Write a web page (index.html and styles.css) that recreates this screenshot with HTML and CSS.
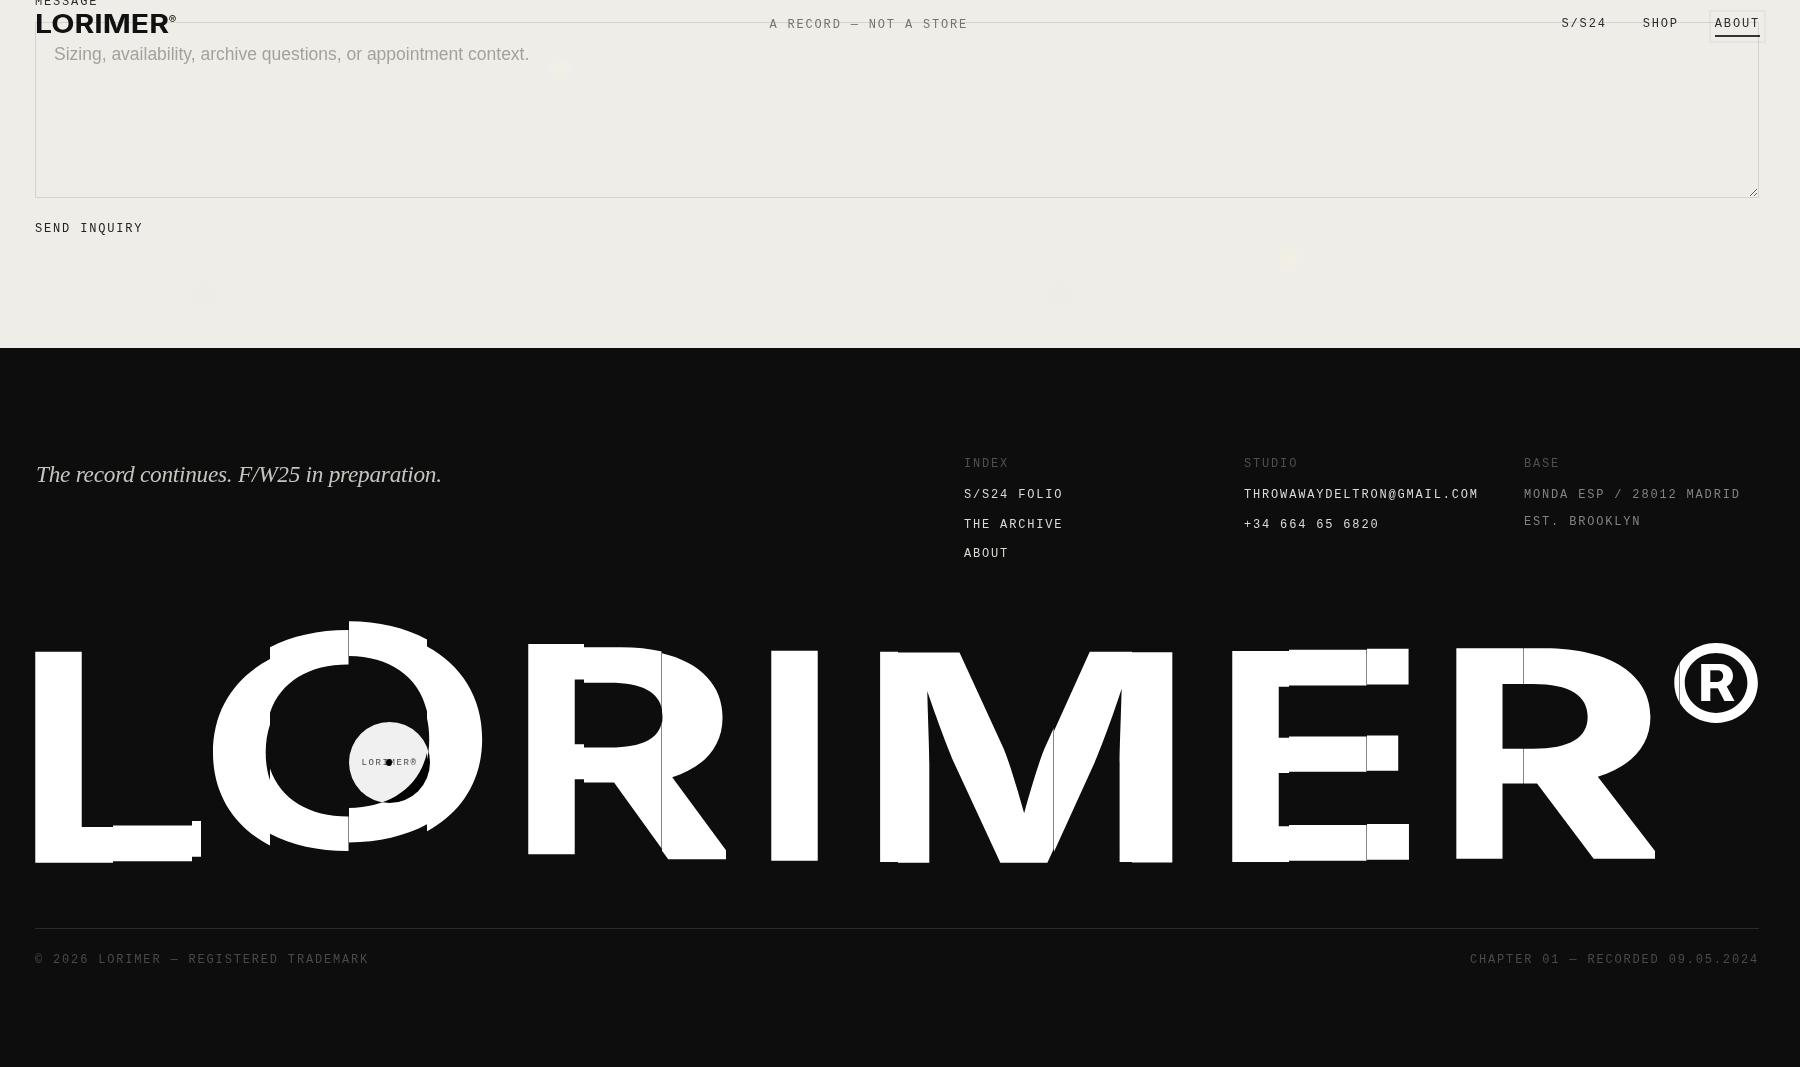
FILE: index.html
```html
<!DOCTYPE html>
<html lang="en">
<head>
  <meta charset="UTF-8">
  <meta name="viewport" content="width=device-width, initial-scale=1.0">
  <title>Lorimer - About</title>
  <link rel="stylesheet" href="styles.css">
</head>
<body>
  <header class="site-header">
    <a class="logo" href="#">
      <svg width="141" height="20" viewBox="0 0 141 20">
        <text class="logo-word" x="0" y="18" textLength="134" lengthAdjust="spacingAndGlyphs">LORIMER</text>
        <text class="logo-reg" x="133.5" y="9">®</text>
      </svg>
    </a>
    <span class="tagline-top">A RECORD — NOT A STORE</span>
    <nav class="site-nav">
      <a href="#">S/S24</a>
      <a href="#">SHOP</a>
      <a class="current" href="#">ABOUT</a>
    </nav>
  </header>

  <section class="inquiry">
    <label class="field-label" for="message">MESSAGE</label>
    <textarea class="field-text" id="message" placeholder="Sizing, availability, archive questions, or appointment context."></textarea>
    <button class="send" type="button">SEND INQUIRY</button>
  </section>

  <footer class="site-footer">
    <div class="footer-top">
      <p class="record">The record continues. F/W25 in preparation.</p>
      <div class="footer-col">
        <h4>INDEX</h4>
        <a href="#">S/S24 FOLIO</a>
        <a href="#">THE ARCHIVE</a>
        <a href="#">ABOUT</a>
      </div>
      <div class="footer-col">
        <h4>STUDIO</h4>
        <a href="#">THROWAWAYDELTRON@GMAIL.COM</a>
        <a href="#">+34 664 65 6820</a>
      </div>
      <div class="footer-col base">
        <h4>BASE</h4>
        <span>MONDA ESP / 28012 MADRID</span>
        <span>EST. BROOKLYN</span>
      </div>
    </div>

    <div class="wordmark">
      <!-- each letter is real text, cut into columns that sit slightly out of line -->
      <svg class="wordmark-svg" width="1724" height="270" viewBox="35 610 1724 270">
        <defs>
          <text id="g-l" class="wm">L</text>
          <text id="g-o" class="wm wm-o">O</text>
          <text id="g-r" class="wm">R</text>
          <text id="g-i" class="wm">I</text>
          <text id="g-m" class="wm">M</text>
          <text id="g-e" class="wm">E</text>
          <text id="g-reg" class="wm wm-reg">®</text>

          <clipPath id="l1"><rect x="30" y="600" width="83" height="280"/></clipPath>
          <clipPath id="l2"><rect x="113" y="600" width="79" height="280"/></clipPath>
          <clipPath id="l3"><rect x="192" y="600" width="9" height="280"/></clipPath>
          <clipPath id="o1"><rect x="200" y="600" width="70" height="280"/></clipPath>
          <clipPath id="o2"><rect x="270" y="600" width="78.5" height="280"/></clipPath>
          <clipPath id="o3"><rect x="349" y="600" width="78" height="280"/></clipPath>
          <clipPath id="o4"><rect x="427" y="600" width="70" height="280"/></clipPath>
          <clipPath id="r1"><rect x="520" y="600" width="64" height="280"/></clipPath>
          <clipPath id="r2"><rect x="584" y="600" width="77.5" height="280"/></clipPath>
          <clipPath id="r3"><rect x="662" y="600" width="64" height="280"/></clipPath>
          <clipPath id="m1"><rect x="870" y="600" width="28" height="280"/></clipPath>
          <clipPath id="m2"><rect x="898" y="600" width="155.5" height="280"/></clipPath>
          <clipPath id="m3"><rect x="1054" y="600" width="78" height="280"/></clipPath>
          <clipPath id="m4"><rect x="1132" y="600" width="50" height="280"/></clipPath>
          <clipPath id="e1"><rect x="1225" y="600" width="64" height="280"/></clipPath>
          <clipPath id="e2"><rect x="1289" y="600" width="77.5" height="280"/></clipPath>
          <clipPath id="e3"><rect x="1367" y="600" width="45" height="280"/></clipPath>
          <clipPath id="s1"><rect x="1450" y="600" width="73.5" height="280"/></clipPath>
          <clipPath id="s2"><rect x="1524" y="600" width="131" height="280"/></clipPath>
          <clipPath id="t1"><rect x="1665" y="600" width="14.5" height="280"/></clipPath>
          <clipPath id="t2"><rect x="1680" y="600" width="90" height="280"/></clipPath>
        </defs>

        <g clip-path="url(#l1)"><use href="#g-l" transform="translate(14.7 862.7) scale(3.12 2.898)"/></g>
        <g clip-path="url(#l2)"><use href="#g-l" transform="translate(-17.1 861.2) scale(4.13 2.898)"/></g>
        <g clip-path="url(#l3)"><use href="#g-l" transform="translate(-17.1 856.7) scale(4.13 2.898)"/></g>

        <g clip-path="url(#o1)"><use href="#g-o" transform="translate(192.7 860) scale(4.03 2.96)"/></g>
        <g clip-path="url(#o2)"><use href="#g-o" transform="translate(192.7 848.2) scale(4.03 2.96)"/></g>
        <g clip-path="url(#o3)"><use href="#g-o" transform="translate(192.7 839.6) scale(4.03 2.96)"/></g>
        <g clip-path="url(#o4)"><use href="#g-o" transform="translate(192.7 846.6) scale(4.03 2.96)"/></g>

        <g clip-path="url(#r1)"><use href="#g-r" transform="translate(507.7 854.3) scale(3.12 2.892)"/></g>
        <g clip-path="url(#r2)"><use href="#g-r" transform="translate(484.4 857.6) scale(3.905 2.892)"/></g>
        <g clip-path="url(#r3)"><use href="#g-r" transform="translate(484.4 859.3) scale(3.905 2.892)"/></g>

        <use href="#g-i" transform="translate(750.7 860.7) scale(3.12 2.885)"/>

        <g clip-path="url(#m1)"><use href="#g-m" transform="translate(855.4 862) scale(3.75 2.89)"/></g>
        <g clip-path="url(#m2)"><use href="#g-m" transform="translate(849.1 862.7) scale(3.75 2.89)"/></g>
        <g clip-path="url(#m3)"><use href="#g-m" transform="translate(851 862) scale(3.75 2.89)"/></g>
        <g clip-path="url(#m4)"><use href="#g-m" transform="translate(847.5 862.5) scale(3.75 2.89)"/></g>

        <g clip-path="url(#e1)"><use href="#g-e" transform="translate(1211.7 862) scale(3.12 2.9)"/></g>
        <g clip-path="url(#e2)"><use href="#g-e" transform="translate(1183.6 860.7) scale(4.07 2.9)"/></g>
        <g clip-path="url(#e3)"><use href="#g-e" transform="translate(1183.6 859.7) scale(4.07 2.9)"/></g>

        <g clip-path="url(#s1)"><use href="#g-r" transform="translate(1435.9 858.7) scale(3.1 2.892)"/></g>
        <g clip-path="url(#s2)"><use href="#g-r" transform="translate(1401.6 858.7) scale(4.08 2.892)"/></g>

        <g clip-path="url(#t1)"><use href="#g-reg" transform="translate(1666.9 747) scale(1.47 1.41)"/></g>
        <g clip-path="url(#t2)"><use href="#g-reg" transform="translate(1666.9 747) scale(1.47 1.41)"/></g>
      </svg>

      <div class="cursor">
        <span class="cursor-label">LORIMER®</span>
        <span class="cursor-dot"></span>
      </div>
    </div>

    <div class="footer-bottom">
      <span>© 2026 LORIMER — REGISTERED TRADEMARK</span>
      <span>CHAPTER 01 — RECORDED 09.05.2024</span>
    </div>
  </footer>
</body>
</html>
```
FILE: styles.css
```css
* {
  box-sizing: border-box;
}

html,
body {
  height: 100%;
}

body {
  margin: 0;
  overflow: hidden;
  background-color: #0d0d0e;
  font-family: "Liberation Mono", monospace;
  font-size: 12px;
  letter-spacing: 1.83px;
}

a {
  color: inherit;
  text-decoration: none;
}

/* header */
.site-header {
  position: fixed;
  top: 0;
  left: 0;
  right: 0;
  z-index: 5;
  display: flex;
  justify-content: space-between;
  align-items: center;
  height: 48px;
  padding: 0 40px 0 35px;
  color: #2b2b2b;
}

.logo {
  display: block;
  height: 20px;
  margin-top: 2px;
}

.logo svg {
  display: block;
  overflow: visible;
}

.logo-word {
  font-family: Inter, sans-serif;
  font-size: 25px;
  font-weight: 700;
  letter-spacing: 0;
  fill: #111;
}

.logo-reg {
  font-family: Inter, sans-serif;
  font-size: 12px;
  font-weight: 600;
  letter-spacing: 0;
  fill: #333;
}

.tagline-top {
  margin-top: 1px;
  color: #74736f;
}

.site-nav {
  display: flex;
  gap: 36px;
  margin-top: 4px;
}

.site-nav a {
  line-height: 16px;
  padding-bottom: 3px;
  border-bottom: 2px solid transparent;
}

.site-nav .current {
  border-bottom-color: #333;
  outline: 2px solid rgba(0, 0, 0, 0.035);
  outline-offset: 4px;
}

/* inquiry form, the page is scrolled so its top is cut off */
.inquiry {
  display: flex;
  flex-direction: column;
  align-items: flex-start;
  height: 348px;
  padding: 0 41px 0 35px;
  overflow: hidden;
  background-color: #efede8;
  background-image:
    radial-gradient(circle at 560px 70px, rgba(250, 248, 225, 0.25), transparent 16px),
    radial-gradient(circle at 1290px 258px, rgba(250, 246, 215, 0.3), transparent 16px),
    radial-gradient(circle at 1060px 295px, rgba(228, 228, 222, 0.2), transparent 16px),
    radial-gradient(circle at 205px 295px, rgba(228, 228, 222, 0.2), transparent 16px);
}

.field-label {
  display: block;
  height: 14px;
  margin: -6px 0 14px;
  line-height: 16px;
  color: #2b2b2b;
}

.field-text {
  display: block;
  width: 100%;
  height: 176px;
  padding: 21px 18px;
  border: 1px solid #d6d4cf;
  border-radius: 0;
  background: transparent;
  font-family: "Liberation Sans", Arial, sans-serif;
  font-size: 17.5px;
  letter-spacing: 0;
  color: #222;
  outline: none;
}

.field-text::placeholder {
  color: #a3a29d;
  opacity: 1;
}

.send {
  margin-top: 23px;
  padding: 0;
  border: none;
  background: none;
  font: inherit;
  letter-spacing: inherit;
  line-height: 16px;
  color: #222;
  cursor: pointer;
}

/* footer */
.site-footer {
  height: 719px;
  padding: 108px 41px 0 35px;
  background-color: #0d0d0e;
}

.footer-top {
  display: grid;
  grid-template-columns: 1fr 240px 240px 235px;
  gap: 40px;
  height: 105px;
}

.record {
  margin: 0;
  padding-left: 1px;
  font-family: "Liberation Serif", serif;
  font-style: italic;
  font-size: 23.3px;
  line-height: 36px;
  letter-spacing: -0.27px;
  color: #c6c4be;
}

.footer-col {
  display: flex;
  flex-direction: column;
  gap: 13.5px;
  align-items: flex-start;
  line-height: 16px;
  color: #dcdbd6;
  white-space: nowrap;
}

.footer-col h4 {
  margin: 0 0 1.8px;
  font-size: 12px;
  font-weight: 400;
  color: #4f4f4f;
}

.base {
  gap: 10.7px;
  color: #848380;
}

.base h4 {
  margin-bottom: 4.3px;
}

.wordmark {
  position: relative;
  margin-top: 49px;
  height: 270px;
}

.wordmark-svg {
  display: block;
  overflow: visible;
}

.wm {
  font-family: Inter, sans-serif;
  font-size: 100px;
  font-weight: 700;
  letter-spacing: 0;
  fill: #fff;
}

.wm-o {
  font-weight: 600;
}

.wm-reg {
  font-weight: 500;
}

.cursor {
  position: absolute;
  left: 314px;
  top: 112px;
  display: flex;
  align-items: center;
  justify-content: center;
  width: 81px;
  height: 81px;
  border-radius: 50%;
  background-color: #fdfdfe;
  mix-blend-mode: difference;
}

.cursor-label {
  font-size: 9px;
  letter-spacing: 1.6px;
  color: #555;
}

.cursor-dot {
  position: absolute;
  left: 37px;
  top: 37px;
  width: 6px;
  height: 7px;
  border-radius: 50%;
  background-color: #0d0d0e;
}

.footer-bottom {
  display: flex;
  justify-content: space-between;
  margin-top: 48px;
  padding-top: 23px;
  border-top: 1px solid #2a2a2a;
  line-height: 16px;
  color: #4a4a4a;
}
```
